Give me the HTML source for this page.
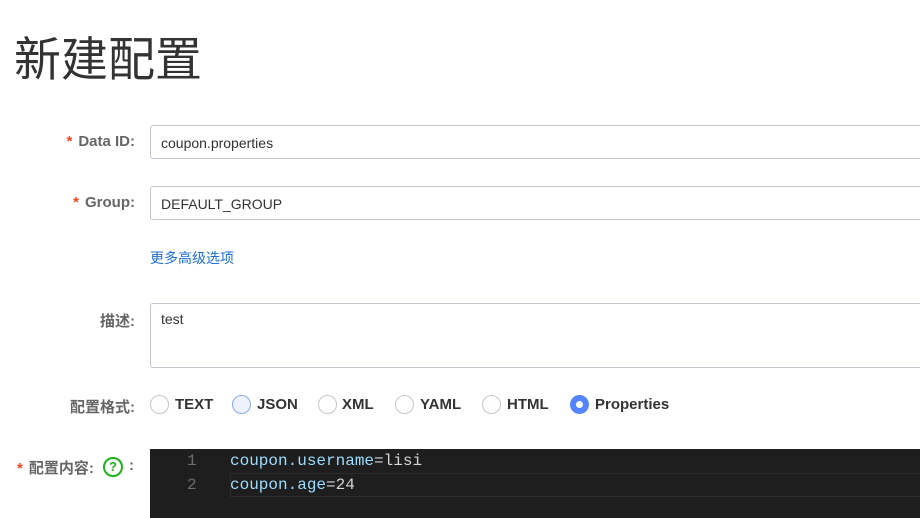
<!DOCTYPE html>
<html><head><meta charset="utf-8"><style>
body{margin:0;width:920px;height:518px;overflow:hidden;background:#fff;font-family:"Liberation Sans","Noto Sans CJK SC",sans-serif;position:relative}
.a{position:absolute}
h1{position:absolute;left:14px;top:24px;margin:0;font-size:47px;font-weight:normal;color:#333;line-height:64px;font-family:"Noto Sans CJK SC",sans-serif}
.lbl{position:absolute;right:785px;font-size:15px;font-weight:bold;color:#666;white-space:nowrap}
.star{color:#f5421d;margin-right:6px}
.inp{position:absolute;left:150px;width:790px;border:1px solid #c4c6cf;border-radius:3px;box-sizing:border-box;font-size:14px;color:#333;padding-left:10px}
.r{position:absolute;top:395px;width:19px;height:19px;border:1px solid #c4c6cf;border-radius:50%;box-sizing:border-box;background:#fff}
.rt{position:absolute;top:396px;font-size:15px;font-weight:bold;color:#333}
.code{position:absolute;left:150px;top:449px;width:770px;height:69px;background:#1e1e1e;font-family:"Liberation Mono",monospace;font-size:16px}
</style></head><body>
<h1>新建配置</h1>
<div class="lbl" style="top:133px"><span class="star">*</span>Data ID:</div>
<div class="inp" style="top:125px;height:34px;line-height:34px">coupon.properties</div>
<div class="lbl" style="top:194px"><span class="star">*</span>Group:</div>
<div class="inp" style="top:186px;height:34px;line-height:34px">DEFAULT_GROUP</div>
<div class="a" style="left:150px;top:248px;font-size:14px;color:#1f6fd1">更多高级选项</div>
<div class="lbl" style="top:310px">描述:</div>
<div class="inp" style="top:303px;height:65px;line-height:30px">test</div>
<div class="lbl" style="top:396px">配置格式:</div>
<div class="r" style="left:150px"></div><div class="rt" style="left:175px">TEXT</div>
<div class="r" style="left:232px;border-color:#8aa8ec;background:#eef2fd"></div><div class="rt" style="left:257px">JSON</div>
<div class="r" style="left:318px"></div><div class="rt" style="left:342px">XML</div>
<div class="r" style="left:395px"></div><div class="rt" style="left:420px">YAML</div>
<div class="r" style="left:482px"></div><div class="rt" style="left:507px">HTML</div>
<div class="r" style="left:570px;border:none;background:#5584ff"><div class="a" style="left:6px;top:6px;width:7px;height:7px;border-radius:50%;background:#fff"></div></div><div class="rt" style="left:595px">Properties</div>
<div class="a" style="left:17px;top:457px;font-size:15px;font-weight:bold;color:#666;white-space:nowrap"><span class="star">*</span>配置内容:</div>
<div class="a" style="left:103px;top:457px;width:16px;height:16px;border:2px solid #1ab31a;border-radius:50%;color:#1ab31a;font-size:13px;font-weight:bold;text-align:center;line-height:16px">?</div>
<div class="a" style="left:129px;top:457px;font-size:15px;font-weight:bold;color:#666">:</div>
<div class="code">
<div class="a" style="left:80px;top:24px;width:700px;height:22px;border:1px solid #2b2b2b"></div>
<div class="a" style="left:37px;top:0px;color:#6e6e6e;line-height:24px">1<br>2</div>
<div class="a" style="left:80px;top:0px;color:#9cdcfe;line-height:24px;white-space:pre">coupon.username<span style="color:#d4d4d4">=lisi</span><br>coupon.age<span style="color:#d4d4d4">=24</span></div>
</div>
</body></html>
